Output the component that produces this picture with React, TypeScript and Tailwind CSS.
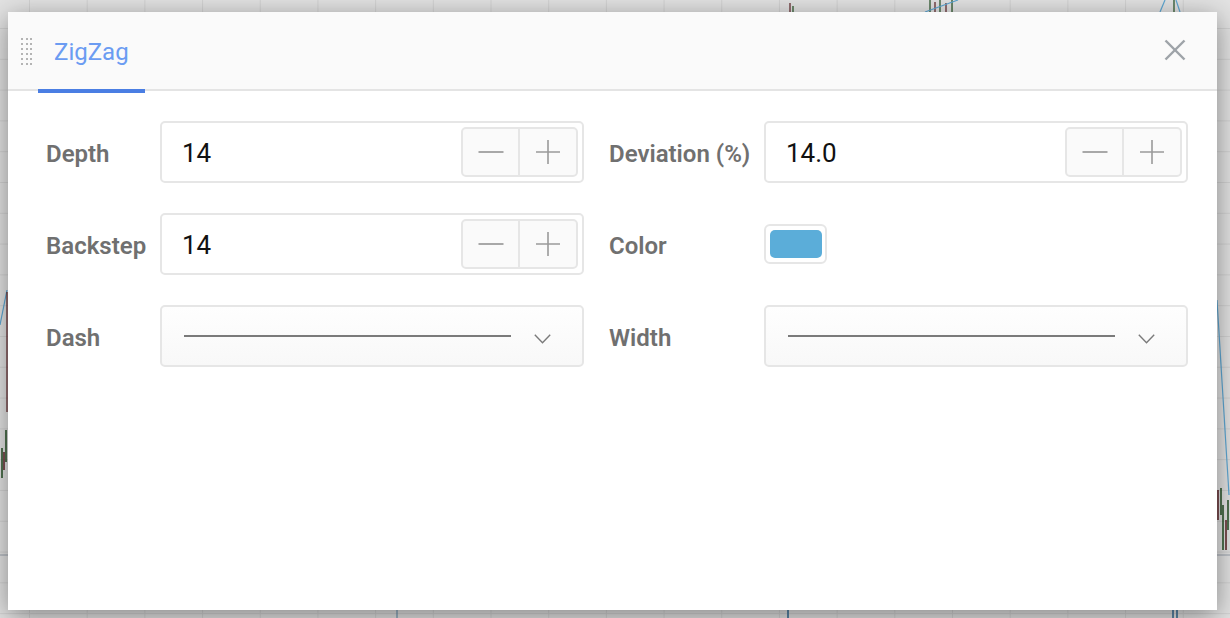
import React from "react";

const font = { fontFamily: "Roboto, 'Liberation Sans', Arial, sans-serif" };

function Stepper() {
  return (
    <div className="flex h-[50px] w-[117px] shrink-0 overflow-hidden rounded-[5px] border-2 border-[#e6e6e6] bg-[#fafafa]">
      <button className="flex w-[57px] items-center justify-center border-r-2 border-[#e6e6e6]">
        <svg width="26" height="4" viewBox="0 0 26 4">
          <line x1="0.5" y1="2" x2="25.5" y2="2" stroke="#8c8c8c" strokeWidth="1.6" />
        </svg>
      </button>
      <button className="flex flex-1 items-center justify-center">
        <svg width="26" height="26" viewBox="0 0 26 26">
          <line x1="1" y1="13" x2="25" y2="13" stroke="#9a9a9a" strokeWidth="1.6" />
          <line x1="13" y1="1" x2="13" y2="25" stroke="#9a9a9a" strokeWidth="1.6" />
        </svg>
      </button>
    </div>
  );
}

function NumberInput({ value }: { value: string }) {
  return (
    <div className="flex h-[62px] items-center rounded-[5px] border-2 border-[#e6e6e6] bg-white pl-[20px] pr-[4px]">
      <span className="flex-1 pt-[1px] text-[26px] leading-none text-[#111]">{value}</span>
      <Stepper />
    </div>
  );
}

function LineSelect() {
  return (
    <div className="flex h-[62px] items-center rounded-[5px] border-2 border-[#e6e6e6] bg-[linear-gradient(to_bottom,#fefefe,#f8f8f8)] pl-[22px] pr-[31px]">
      <div className="h-[2px] w-[327px] bg-[#7a7a7a]" />
      <div className="flex-1" />
      <svg width="17" height="10" viewBox="0 0 17 10" className="mt-[6px]">
        <polyline points="0.8,0.8 8.5,8.8 16.2,0.8" fill="none" stroke="#7a7a7a" strokeWidth="1.4" />
      </svg>
    </div>
  );
}

function Label({ children, wide }: { children: React.ReactNode; wide?: boolean }) {
  return (
    <div
      className={`flex h-[62px] items-center pt-[3px] text-[24px] font-semibold leading-none text-[#707070] ${
        wide ? "pl-[25px]" : ""
      }`}
    >
      {children}
    </div>
  );
}

export default function App() {
  return (
    <div
      style={font}
      className="relative h-[618px] w-[1230px] overflow-hidden bg-[#e3e3e3] bg-[linear-gradient(to_right,#d3d3d3_1px,transparent_1px),linear-gradient(to_bottom,#d3d3d3_1px,transparent_1px)] [background-position:29px_28px] [background-size:57.7px_30.8px]"
    >
      {/* chart fragments behind */}
      <svg className="absolute inset-0" width="1230" height="618" viewBox="0 0 1230 618">
        <line x1="0" y1="555" x2="1230" y2="555" stroke="#9aa2ad" strokeWidth="1" />
        <polyline points="0,325 7,290" fill="none" stroke="#5ea7d3" strokeWidth="1.2" />
        <line x1="7" y1="292" x2="7" y2="412" stroke="#5a1e22" strokeWidth="1.2" />
        <line x1="6" y1="430" x2="6" y2="462" stroke="#1f4d1f" strokeWidth="1.5" />
        <line x1="2" y1="448" x2="2" y2="478" stroke="#1f4d1f" strokeWidth="1.5" />
        <line x1="4" y1="452" x2="4" y2="470" stroke="#5a1e22" strokeWidth="1.5" />
        <polyline points="1217,300 1229,495" fill="none" stroke="#5ea7d3" strokeWidth="1.2" />
        <line x1="1218" y1="490" x2="1218" y2="520" stroke="#5a1e22" strokeWidth="1.5" />
        <line x1="1221" y1="488" x2="1221" y2="515" stroke="#1f4d1f" strokeWidth="1.5" />
        <line x1="1223" y1="505" x2="1223" y2="550" stroke="#1f4d1f" strokeWidth="1.5" />
        <line x1="1226" y1="520" x2="1226" y2="550" stroke="#5a1e22" strokeWidth="1.5" />
        <line x1="1228" y1="500" x2="1228" y2="530" stroke="#1f4d1f" strokeWidth="1.5" />
        <line x1="790" y1="3" x2="790" y2="12" stroke="#5a1e22" strokeWidth="1.2" />
        <line x1="793" y1="6" x2="793" y2="12" stroke="#1f4d1f" strokeWidth="1.2" />
        <line x1="930" y1="0" x2="930" y2="12" stroke="#1f4d1f" strokeWidth="1.2" />
        <line x1="935" y1="2" x2="935" y2="12" stroke="#5a1e22" strokeWidth="1.2" />
        <line x1="940" y1="0" x2="940" y2="12" stroke="#1f4d1f" strokeWidth="1.2" />
        <line x1="946" y1="3" x2="946" y2="12" stroke="#5a1e22" strokeWidth="1.2" />
        <line x1="952" y1="0" x2="952" y2="12" stroke="#1f4d1f" strokeWidth="1.2" />
        <polyline points="925,12 958,0" fill="none" stroke="#5ea7d3" strokeWidth="1.2" />
        <polyline points="1160,12 1165,0" fill="none" stroke="#5ea7d3" strokeWidth="1.2" />
        <line x1="1174" y1="0" x2="1174" y2="12" stroke="#1f4d1f" strokeWidth="1.2" />
        <polyline points="1176,0 1180,12" fill="none" stroke="#5ea7d3" strokeWidth="1.2" />
        <line x1="788" y1="610" x2="788" y2="618" stroke="#5b87a8" strokeWidth="2" />
        <line x1="1173" y1="610" x2="1173" y2="618" stroke="#5b87a8" strokeWidth="2" />
        <line x1="1177" y1="610" x2="1177" y2="618" stroke="#5b87a8" strokeWidth="2" />
        <line x1="397" y1="610" x2="397" y2="618" stroke="#5b87a8" strokeWidth="1" />
      </svg>

      {/* dialog */}
      <div className="absolute left-[8px] top-[12px] flex h-[598px] w-[1209px] flex-col bg-white shadow-[0_6px_26px_rgba(0,0,0,0.42)]">
        {/* header */}
        <div className="relative flex h-[79px] shrink-0 items-stretch border-b-2 border-[#e4e4e4] bg-[#fafafa]">
          <div className="ml-[13px] mt-[26px] grid h-[27px] w-[11px] grid-cols-3 gap-x-[3px] gap-y-[3px]">
            {Array.from({ length: 18 }).map((_, i) => (
              <span key={i} className="h-[2px] w-[2px] bg-[#b4b4b4]" />
            ))}
          </div>
          <div className="relative ml-[6px] flex items-center px-[16px] pt-[3px]">
            <span className="text-[24px] leading-none text-[#6b9cf2]">ZigZag</span>
            <div className="absolute bottom-[-4px] left-0 right-0 h-[4px] bg-[#4a7ee3]" />
          </div>
          <div className="flex-1" />
          <button className="mr-[31px] flex items-center pb-[2px]">
            <svg width="22" height="22" viewBox="0 0 22 22">
              <line x1="1.5" y1="1.5" x2="20.5" y2="20.5" stroke="#9ea3a8" strokeWidth="2.4" />
              <line x1="20.5" y1="1.5" x2="1.5" y2="20.5" stroke="#9ea3a8" strokeWidth="2.4" />
            </svg>
          </button>
        </div>

        {/* body */}
        <div className="grid grid-cols-[114px_424px_180px_424px] gap-y-[30px] pl-[38px] pt-[30px]">
          <Label>Depth</Label>
          <NumberInput value="14" />
          <Label wide>Deviation (%)</Label>
          <NumberInput value="14.0" />

          <Label>Backstep</Label>
          <NumberInput value="14" />
          <Label wide>Color</Label>
          <div className="flex h-[62px] items-center">
            <div className="flex h-[40px] w-[63px] items-center justify-center rounded-[6px] border-2 border-[#e6e6e6] bg-white">
              <div className="h-[28px] w-[52px] rounded-[5px] bg-[#5badd9]" />
            </div>
          </div>

          <Label>Dash</Label>
          <LineSelect />
          <Label wide>Width</Label>
          <LineSelect />
        </div>
      </div>
    </div>
  );
}
